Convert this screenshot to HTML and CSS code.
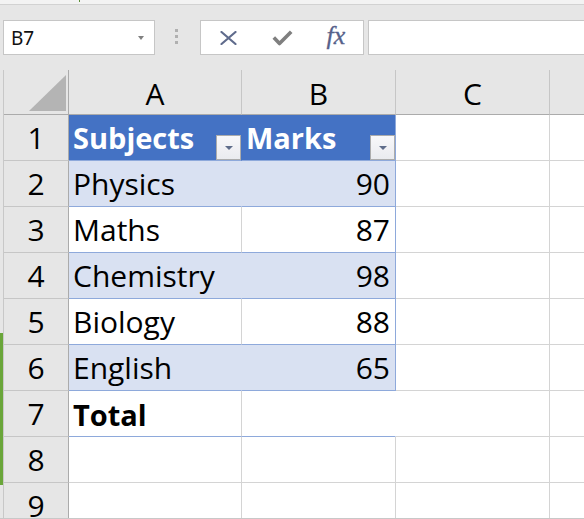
FILE: index.html
```html
<!DOCTYPE html>
<html>
<head>
<meta charset="utf-8">
<link rel="stylesheet" href="styles.css">
</head>
<body>
<div class="topstrip"><span class="tick"></span></div>
<div class="toolbar">
  <div class="namebox"><span class="nb-text">B7</span><span class="nb-arrow"></span></div>
  <div class="grip"><i></i><i></i><i></i></div>
  <div class="fbuttons">
    <span class="fb"><svg width="17" height="14" viewBox="0 0 17 14"><path d="M1.5 1 L15.5 13 M15.5 1 L1.5 13" stroke="#5f6b8c" stroke-width="2.2" fill="none" stroke-linecap="round"/></svg></span>
    <span class="fb"><svg width="21" height="16" viewBox="0 0 21 16"><path d="M1.8 7.5 L7.5 13.5 L19.2 1.8" stroke="#7f7f7f" stroke-width="3.6" fill="none" stroke-linejoin="round"/></svg></span>
    <span class="fb fx">fx</span>
  </div>
  <div class="finput"></div>
</div>
<div class="sheet">
  <div class="grid">
    <div class="c corner"><svg width="37" height="36" viewBox="0 0 37 36"><polygon points="37,0 37,36 0,36" fill="#b4b4b4"/></svg></div>
    <div class="c ch">A</div>
    <div class="c ch">B</div>
    <div class="c ch">C</div>
    <div class="c ch last"></div>

    <div class="c rh">1</div>
    <div class="c th"><span class="label">Subjects</span><span class="filter"></span></div>
    <div class="c th thb"><span class="label">Marks</span><span class="filter"></span></div>
    <div class="c"></div>
    <div class="c last"></div>

    <div class="c rh">2</div>
    <div class="c t band fill">Physics</div>
    <div class="c t band num edge">90</div>
    <div class="c"></div>
    <div class="c last"></div>

    <div class="c rh">3</div>
    <div class="c t">Maths</div>
    <div class="c t num edge">87</div>
    <div class="c"></div>
    <div class="c last"></div>

    <div class="c rh">4</div>
    <div class="c t band fill">Chemistry</div>
    <div class="c t band num edge">98</div>
    <div class="c"></div>
    <div class="c last"></div>

    <div class="c rh">5</div>
    <div class="c t">Biology</div>
    <div class="c t num edge">88</div>
    <div class="c"></div>
    <div class="c last"></div>

    <div class="c rh">6</div>
    <div class="c t band fill">English</div>
    <div class="c t band num edge">65</div>
    <div class="c"></div>
    <div class="c last"></div>

    <div class="c rh">7</div>
    <div class="c t bold">Total</div>
    <div class="c t nob"></div>
    <div class="c"></div>
    <div class="c last"></div>

    <div class="c rh">8</div>
    <div class="c"></div>
    <div class="c"></div>
    <div class="c"></div>
    <div class="c last"></div>

    <div class="c rh">9</div>
    <div class="c"></div>
    <div class="c"></div>
    <div class="c"></div>
    <div class="c last"></div>
  </div>
</div>
<div class="greenbar"></div>
</body>
</html>
```
FILE: styles.css
```css
html, body {
  margin: 0;
  padding: 0;
}
body {
  width: 584px;
  height: 519px;
  overflow: hidden;
  background: #e6e6e6;
  position: relative;
  font-family: "Open Sans", Lato, sans-serif;
}
.topstrip {
  height: 4px;
  background: #f3f3f3;
  border-bottom: 1px solid #d2d2d2;
}
.tick {
  display: block;
  margin-left: 79px;
  width: 1px;
  height: 2px;
  background: #5a8f35;
}
.toolbar {
  height: 65px;
  box-sizing: border-box;
  padding-top: 15px;
  display: flex;
  align-items: flex-start;
}
.namebox {
  margin-left: 3px;
  width: 152px;
  height: 35px;
  box-sizing: border-box;
  background: #fff;
  border: 1px solid #c6c6c6;
  display: flex;
  align-items: center;
}
.nb-text {
  font-family: "Noto Sans", "Open Sans", sans-serif;
  font-size: 19px;
  padding-left: 7px;
  color: #111;
}
.nb-arrow {
  margin-left: auto;
  margin-right: 10px;
  width: 0;
  height: 0;
  border-left: 3.5px solid transparent;
  border-right: 3.5px solid transparent;
  border-top: 4px solid #808080;
}
.grip {
  margin-left: 20px;
  margin-right: 22px;
  width: 3px;
  height: 33px;
  display: flex;
  flex-direction: column;
  justify-content: center;
  gap: 3px;
}
.grip i {
  display: block;
  width: 3px;
  height: 3px;
  background: #b0b0b0;
}
.fbuttons {
  width: 164px;
  height: 35px;
  box-sizing: border-box;
  border: 1px solid #c6c6c6;
  background: #fff;
  display: flex;
}
.fb {
  width: 54px;
  display: flex;
  align-items: center;
  justify-content: center;
}
.fx {
  font-family: "Liberation Serif", serif;
  font-style: italic;
  font-size: 26px;
  color: #56618a;
  padding-bottom: 3px;
  -webkit-text-stroke: 0.3px #56618a;
}
.finput {
  flex: 1;
  height: 35px;
  box-sizing: border-box;
  margin-left: 4px;
  margin-right: -2px;
  border: 1px solid #c6c6c6;
  background: #fff;
}
.sheet {
  height: 449px;
  box-sizing: border-box;
  padding-left: 3px;
  border-bottom: 1px solid #c8c8c8;
  overflow: hidden;
}
.grid {
  display: grid;
  grid-template-columns: 65px 173px 154px 154px 60px;
  grid-template-rows: 45px repeat(9, 46px);
  border-left: 1px solid #c8c8c8;
}
.c {
  box-sizing: border-box;
  background: #fff;
  border-right: 1px solid #d4d4d4;
  border-bottom: 1px solid #d4d4d4;
  display: flex;
  align-items: flex-end;
  padding: 0 5px 7px 4px;
  font-size: 30px;
  line-height: 1;
  color: #000;
  white-space: nowrap;
  overflow: hidden;
}
.last {
  border-right: none;
}
.corner {
  background: #e6e6e6;
  border-right-color: #ababab;
  border-bottom-color: #ababab;
  justify-content: flex-end;
  padding: 0 2px 3px 0;
}
.corner svg {
  display: block;
}
.ch {
  background: #e6e6e6;
  border-right-color: #c6c6c6;
  border-bottom-color: #ababab;
  justify-content: center;
  padding: 0 0 5px 0;
}
.rh {
  background: #e6e6e6;
  border-right-color: #ababab;
  border-bottom-color: #c6c6c6;
  justify-content: center;
  padding: 0 0 7px 0;
}
.th {
  background: #4472c4;
  color: #fff;
  font-weight: 700;
  border-right-color: #4472c4;
  border-bottom-color: #8ea9db;
  justify-content: space-between;
  padding: 0;
}
.thb {
  border-right-color: #8ea9db;
}
.label {
  padding: 0 0 8px 4px;
  font-size: 29px;
}
.filter {
  width: 25px;
  height: 25px;
  box-sizing: border-box;
  flex-shrink: 0;
  border: 1px solid #acacac;
  background: linear-gradient(#f8f8fa, #eaebef);
  display: flex;
  align-items: center;
  justify-content: center;
}
.filter::after {
  content: "";
  display: block;
  width: 0;
  height: 0;
  border-left: 4px solid transparent;
  border-right: 4px solid transparent;
  border-top: 4px solid #5f6d8a;
}
.t {
  border-bottom-color: #8ea9db;
}
.band {
  background: #d9e1f2;
}
.fill {
  border-right-color: #d9e1f2;
}
.edge {
  border-right-color: #8ea9db;
}
.num {
  justify-content: flex-end;
}
.nob {
  border-right-color: #fff;
}
.bold {
  font-weight: 700;
  font-size: 29px;
}
.greenbar {
  position: absolute;
  left: 0;
  top: 333px;
  width: 3px;
  height: 152px;
  background: #6aa63a;
}
```
